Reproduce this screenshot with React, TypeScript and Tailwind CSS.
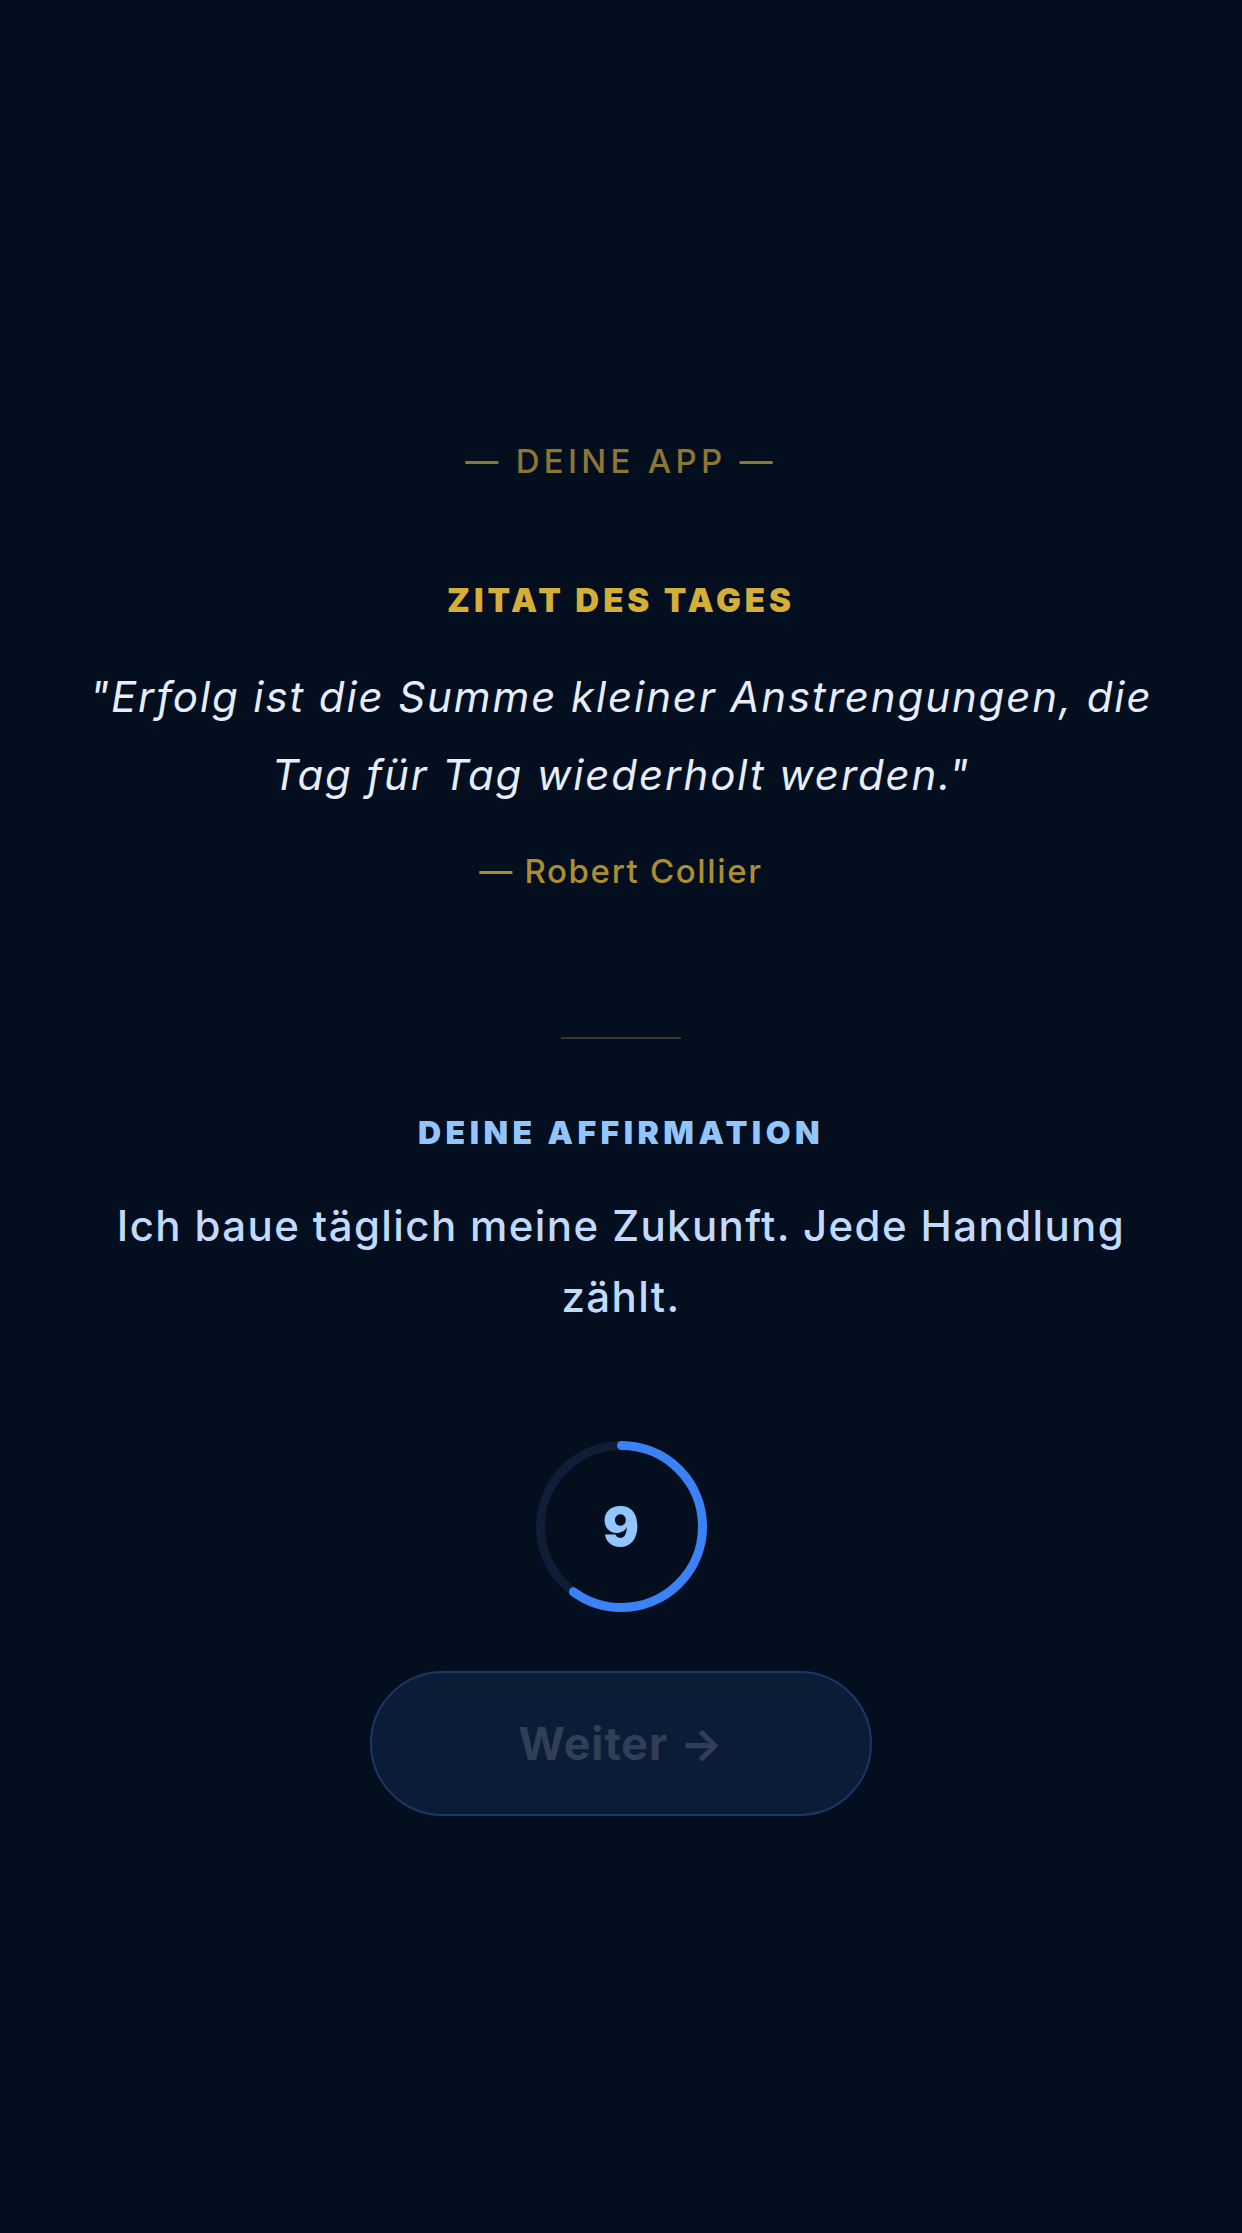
import { useState } from "react";

const TOTAL = 15;

function Countdown({ value }: { value: number }) {
  const size = 171;
  const stroke = 9;
  const r = (size - stroke) / 2;
  const circ = 2 * Math.PI * r;
  const progress = value / TOTAL;
  return (
    <div className="relative h-[171px] w-[171px]">
      <svg width={size} height={size} viewBox={`0 0 ${size} ${size}`} className="-rotate-90">
        <circle cx={size / 2} cy={size / 2} r={r} fill="none" stroke="#101d37" strokeWidth={stroke} />
        <circle
          cx={size / 2}
          cy={size / 2}
          r={r}
          fill="none"
          stroke="#3b82f6"
          strokeWidth={stroke}
          strokeLinecap="round"
          strokeDasharray={circ}
          style={{ strokeDashoffset: circ * (1 - progress) }}
        />
      </svg>
      <span className="absolute inset-0 flex items-center justify-center text-[54px] font-black text-[#93c5fd]">
        {value}
      </span>
    </div>
  );
}

export default function App() {
  const [seconds] = useState(9);

  return (
    <main className="min-h-screen bg-[#030e1f] font-['Inter','Noto_Sans',sans-serif]">
      <div className="flex flex-col items-center px-[72px] pt-[441px] pb-[417px] text-center">
        <p className="text-[33px] leading-[40px] font-medium tracking-[0.13em] text-[#8c7632]">— DEINE APP —</p>

        <h2 className="mt-[99px] text-[33px] leading-[40px] font-black tracking-[0.12em] text-[#d4af37]">ZITAT DES TAGES</h2>
        <p className="mt-[38px] text-[42px] leading-[78px] italic tracking-[0.045em] text-[#e6edfc]">
          "Erfolg ist die Summe kleiner Anstrengungen, die Tag für Tag wiederholt werden."
        </p>
        <p className="mt-[37px] text-[33px] leading-[40px] font-medium tracking-[0.05em] text-[#ae8d30]">— Robert Collier</p>

        <div className="mt-[146px] h-[2px] w-[120px] bg-[#3b3729]" />

        <h2 className="mt-[74px] text-[32px] leading-[40px] font-black tracking-[0.14em] text-[#93c5fd]">DEINE AFFIRMATION</h2>
        <p className="mt-[37px] text-[42px] leading-[71px] font-medium tracking-[0.033em] text-[#c2dafd]">
          Ich baue täglich meine Zukunft. Jede Handlung zählt.
        </p>

        <div className="mt-[109px]">
          <Countdown value={seconds} />
        </div>

        <button
          type="button"
          disabled
          className="mt-[59px] flex h-[145px] w-[502px] items-center justify-center rounded-full border-2 border-[#1b3767] bg-[#0b1c36] text-[45px] font-bold tracking-[0.02em] text-[#303f57]"
        >
          Weiter →
        </button>
      </div>
    </main>
  );
}
